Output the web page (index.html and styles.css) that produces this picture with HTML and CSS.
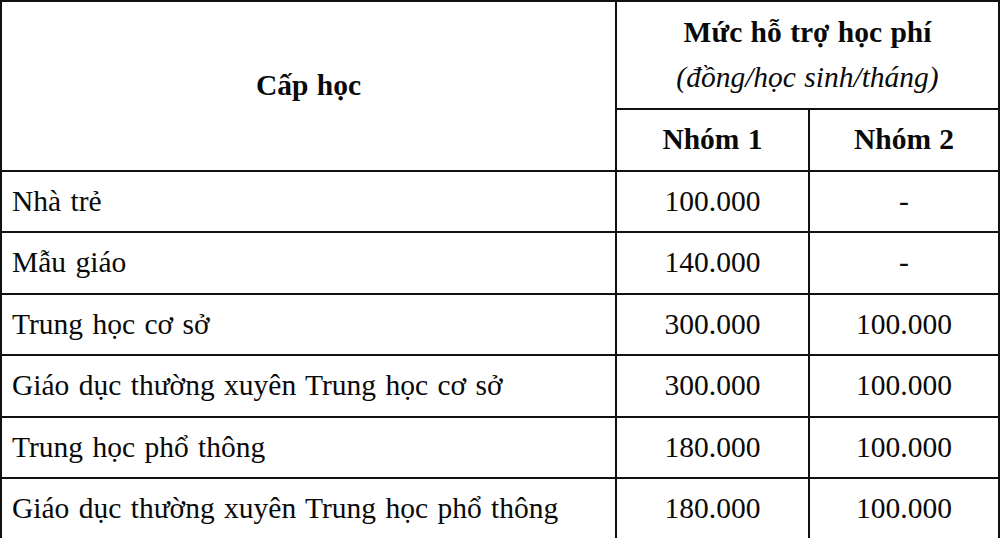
FILE: index.html
```html
<!DOCTYPE html>
<html lang="vi">
<head>
<meta charset="utf-8">
<title>Mức hỗ trợ học phí</title>
<link rel="stylesheet" href="styles.css">
</head>
<body>
<table class="fee-table">
  <colgroup>
    <col class="col-level">
    <col class="col-group1">
    <col class="col-group2">
  </colgroup>
  <thead>
    <tr class="head-top">
      <th rowspan="2" class="level-head">Cấp học</th>
      <th colspan="2" class="fee-head">
        <span class="fee-title">Mức hỗ trợ học phí</span>
        <span class="fee-unit">(đồng/học sinh/tháng)</span>
      </th>
    </tr>
    <tr class="head-sub">
      <th>Nhóm 1</th>
      <th>Nhóm 2</th>
    </tr>
  </thead>
  <tbody>
    <tr><td class="level">Nhà trẻ</td><td>100.000</td><td>-</td></tr>
    <tr><td class="level">Mẫu giáo</td><td>140.000</td><td>-</td></tr>
    <tr><td class="level">Trung học cơ sở</td><td>300.000</td><td>100.000</td></tr>
    <tr><td class="level">Giáo dục thường xuyên Trung học cơ sở</td><td>300.000</td><td>100.000</td></tr>
    <tr><td class="level">Trung học phổ thông</td><td>180.000</td><td>100.000</td></tr>
    <tr><td class="level">Giáo dục thường xuyên Trung học phổ thông</td><td>180.000</td><td>100.000</td></tr>
  </tbody>
</table>
</body>
</html>
```
FILE: styles.css
```css
html, body {
  margin: 0;
  padding: 0;
  background: #fff;
  overflow: hidden;
}

body {
  font-family: "Liberation Serif", "Times New Roman", serif;
  color: #0a0a0a;
}

.fee-table {
  table-layout: fixed;
  width: 1000px;
  border-collapse: separate;
  border-spacing: 0;
  border-top: 2px solid #111;
  border-left: 2px solid #111;
  font-size: 29.5px;
}

.col-level { width: 615px; }
.col-group1 { width: 193px; }
.col-group2 { width: 190px; }

.fee-table th,
.fee-table td {
  box-sizing: border-box;
  border-right: 2px solid #111;
  border-bottom: 2px solid #111;
  padding: 0;
  text-align: center;
  vertical-align: middle;
  line-height: 1.2;
}

.fee-table th {
  font-weight: bold;
  word-spacing: 1px;
}

.head-top th.fee-head {
  height: 108px;
}

.fee-head span {
  display: block;
}

.fee-title {
  margin-bottom: 10px;
}

.fee-unit {
  font-weight: normal;
  font-style: italic;
}

.head-sub th {
  height: 62px;
}

.fee-table td {
  height: 61.4px;
}

.fee-table td.level {
  text-align: left;
  padding-left: 10px;
  word-spacing: 2px;
}
```
